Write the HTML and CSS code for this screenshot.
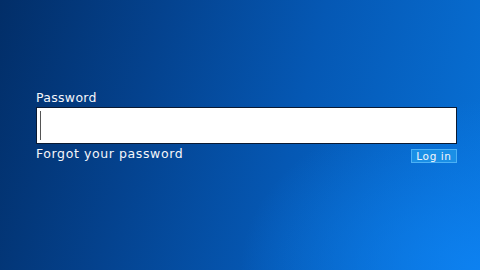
FILE: index.html
```html
<!DOCTYPE html>
<html>
<head>
<meta charset="utf-8">
<link rel="stylesheet" href="styles.css">
</head>
<body>
<div class="screen">
  <form class="login">
    <label class="label">Password</label>
    <div class="field"><span class="caret"></span></div>
    <div class="row">
      <span class="forgot">Forgot your password</span>
      <span class="btn">Log in</span>
    </div>
  </form>
</div>
</body>
</html>
```
FILE: styles.css
```css
html, body {
  margin: 0;
  padding: 0;
  width: 480px;
  height: 270px;
  overflow: hidden;
}
.screen {
  width: 480px;
  height: 270px;
  box-sizing: border-box;
  padding: 90px 23px 0 36px;
  background:
    radial-gradient(ellipse 240px 170px at 480px 270px, rgba(14,132,245,0.85), rgba(14,132,245,0) 100%),
    linear-gradient(104deg, #022e68 0%, #04428e 30%, #0558b4 60%, #0872d8 100%);
  font-family: "DejaVu Sans", Verdana, sans-serif;
  color: #f4f6fa;
}
.login {
  display: flex;
  flex-direction: column;
}
.label {
  font-size: 12.5px;
  line-height: 16px;
  letter-spacing: 0.3px;
  margin-bottom: 1px;
}
.field {
  height: 35px;
  background: #fff;
  border: 1px solid #0a1a33;
  display: flex;
  align-items: center;
  padding-left: 3px;
}
.caret {
  width: 1px;
  height: 29px;
  background: #555;
}
.row {
  display: flex;
  justify-content: space-between;
  align-items: flex-start;
  margin-top: 2px;
}
.forgot {
  font-size: 12.5px;
  line-height: 16px;
  letter-spacing: 0.6px;
}
.btn {
  margin-top: 3px;
  width: 44px;
  height: 12px;
  box-sizing: content-box;
  border: 1px solid #4bb0f5;
  background: #1a8fe6;
  font-size: 10.5px;
  line-height: 12px;
  text-align: center;
  letter-spacing: 0.6px;
}
```
